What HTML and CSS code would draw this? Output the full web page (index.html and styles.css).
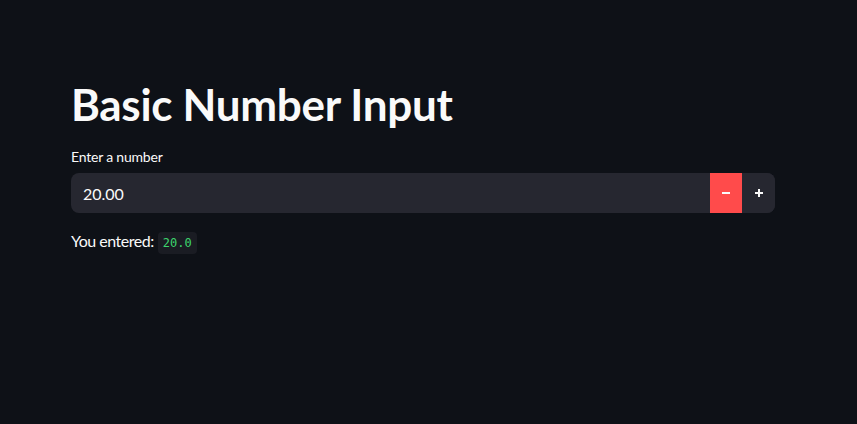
FILE: index.html
```html
<!DOCTYPE html>
<html>
<head>
<meta charset="utf-8">
<link rel="stylesheet" href="styles.css">
</head>
<body>
<main class="main">
  <h1 class="title">Basic Number Input</h1>
  <div class="field">
    <label class="label">Enter a number</label>
    <div class="numinput">
      <input class="value" type="text" value="20.00">
      <button class="step minus" aria-label="minus">
        <svg width="10" height="10" viewBox="0 0 10 10"><rect x="1" y="4" width="8" height="2" fill="#fafafa"/></svg>
      </button>
      <button class="step plus" aria-label="plus">
        <svg width="10" height="10" viewBox="0 0 10 10"><rect x="1" y="4" width="8" height="2" fill="#fafafa"/><rect x="4" y="1" width="2" height="8" fill="#fafafa"/></svg>
      </button>
    </div>
  </div>
  <p class="result"><span class="result-text">You entered:</span> <code class="code">20.0</code></p>
</main>
</body>
</html>
```
FILE: styles.css
```css
html, body {
  margin: 0;
  padding: 0;
  background: #0e1117;
  color: #fafafa;
  font-family: Lato, "Noto Sans", sans-serif;
  height: 100%;
}
.main {
  width: 704px;
  padding: 78px 0 0 71px;
}
.title {
  margin: 0;
  font-size: 44px;
  font-weight: 700;
  line-height: 52px;
  letter-spacing: -0.3px;
}
.field {
  margin-top: 17px;
}
.label {
  display: block;
  font-size: 14px;
  line-height: 20px;
  margin-bottom: 6px;
  letter-spacing: -0.2px;
}
.numinput {
  display: flex;
  height: 40px;
  background: #262730;
  border-radius: 8px;
  overflow: hidden;
}
.value {
  flex: 1;
  min-width: 0;
  background: transparent;
  border: none;
  outline: none;
  color: #fafafa;
  font-family: inherit;
  font-size: 16px;
  padding: 0 12px;
}
.step {
  width: 32px;
  border: none;
  background: #262730;
  display: flex;
  align-items: center;
  justify-content: center;
  padding: 0;
}
.minus {
  background: #ff4b4b;
}
.plus {
  width: 33px;
}
.result {
  margin: 18px 0 0;
  font-size: 16px;
  line-height: 20px;
}
.result-text {
  letter-spacing: -0.5px;
}
.code {
  font-family: "DejaVu Sans Mono", monospace;
  font-size: 12px;
  color: #3dd56d;
  background: #1a1c23;
  padding: 4px 5px;
  border-radius: 4px;
}
```
